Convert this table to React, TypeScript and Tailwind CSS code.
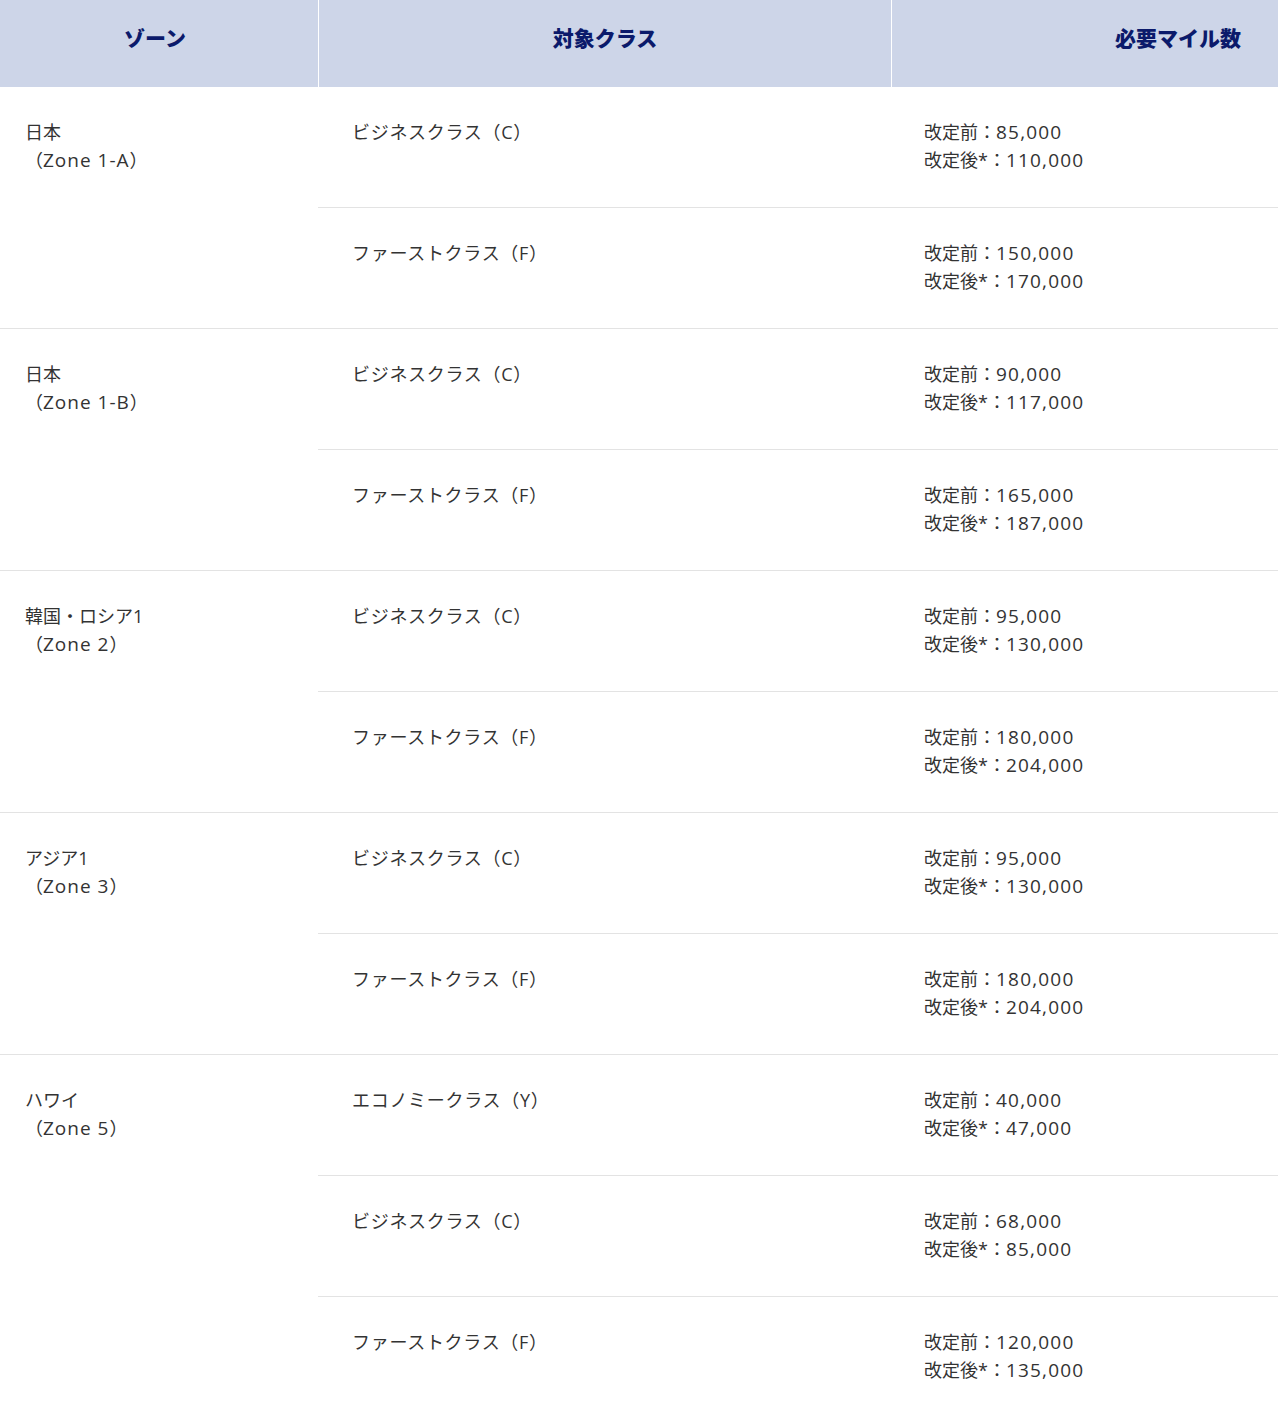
import React from "react";

type Sub = { cls: string; before: string; after: string };
type Zone = { name: string; zone: string; subs: Sub[] };

const zones: Zone[] = [
  {
    name: "日本",
    zone: "Zone 1-A",
    subs: [
      { cls: "ビジネスクラス（C）", before: "85,000", after: "110,000" },
      { cls: "ファーストクラス（F）", before: "150,000", after: "170,000" },
    ],
  },
  {
    name: "日本",
    zone: "Zone 1-B",
    subs: [
      { cls: "ビジネスクラス（C）", before: "90,000", after: "117,000" },
      { cls: "ファーストクラス（F）", before: "165,000", after: "187,000" },
    ],
  },
  {
    name: "韓国・ロシア1",
    zone: "Zone 2",
    subs: [
      { cls: "ビジネスクラス（C）", before: "95,000", after: "130,000" },
      { cls: "ファーストクラス（F）", before: "180,000", after: "204,000" },
    ],
  },
  {
    name: "アジア1",
    zone: "Zone 3",
    subs: [
      { cls: "ビジネスクラス（C）", before: "95,000", after: "130,000" },
      { cls: "ファーストクラス（F）", before: "180,000", after: "204,000" },
    ],
  },
  {
    name: "ハワイ",
    zone: "Zone 5",
    subs: [
      { cls: "エコノミークラス（Y）", before: "40,000", after: "47,000" },
      { cls: "ビジネスクラス（C）", before: "68,000", after: "85,000" },
      { cls: "ファーストクラス（F）", before: "120,000", after: "135,000" },
    ],
  },
];

export default function App() {
  return (
    <div
      className="w-[1278px] bg-white text-[18px] leading-[28px] text-[#333333]"
      style={{ fontFamily: '"Open Sans", "Noto Sans CJK JP", sans-serif' }}
    >
      <div
        className="flex h-[87px] bg-[#cdd5e8] text-[21px] font-black text-[#0b1a6b]"
        style={{ fontFamily: '"Noto Sans CJK JP", sans-serif' }}
      >
        <div className="flex w-[318px] items-center justify-center pb-[14px] pr-[8px]">ゾーン</div>
        <div className="flex w-[573px] items-center justify-center border-l border-white pb-[14px]">対象クラス</div>
        <div className="flex flex-1 items-center justify-end border-l border-white pb-[14px] pr-[37px]">必要マイル数</div>
      </div>
      {zones.map((z, zi) => (
        <div key={zi} className="flex border-b border-[#e3e3e3]">
          <div className="w-[318px] pl-[25px] pt-[31px]">
            <div>{z.name}</div>
            <div>
              （<span className="text-[19px] tracking-[1px]">{z.zone}</span>）
            </div>
          </div>
          <div className="flex flex-1 flex-col">
            {z.subs.map((s, si) => (
              <div
                key={si}
                className={
                  si < z.subs.length - 1
                    ? "flex h-[121px] border-b border-[#e3e3e3]"
                    : "flex h-[120px]"
                }
              >
                <div className="w-[573px] pl-[34px] pt-[31px] tracking-[0.7px]">{s.cls}</div>
                <div className="flex-1 pl-[33px] pt-[31px]">
                  <div>
                    改定前：<span className="text-[19px] tracking-[1.2px]">{s.before}</span>
                  </div>
                  <div>
                    改定後*：<span className="text-[19px] tracking-[1.2px]">{s.after}</span>
                  </div>
                </div>
              </div>
            ))}
          </div>
        </div>
      ))}
    </div>
  );
}
